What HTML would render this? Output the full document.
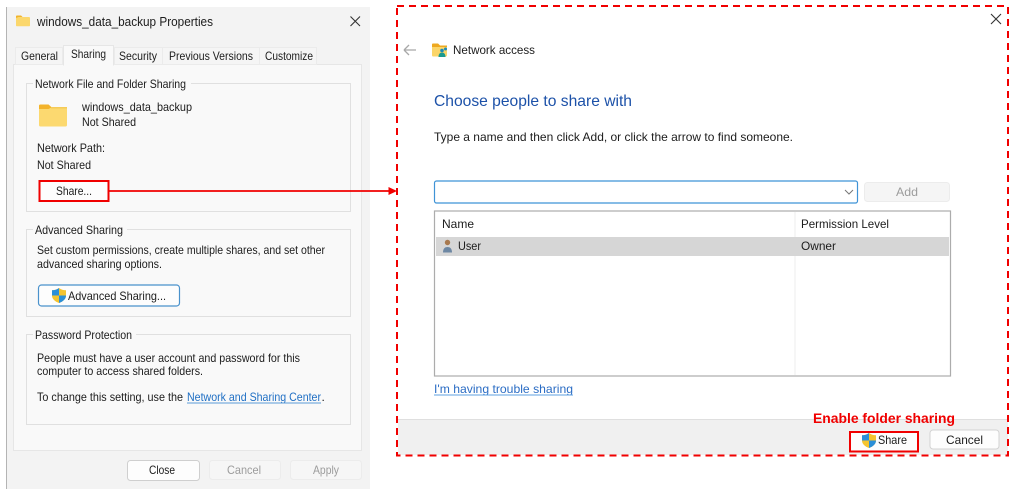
<!DOCTYPE html>
<html><head><meta charset="utf-8"><style>
html,body{margin:0;padding:0;background:#fff;width:1015px;height:494px;overflow:hidden}
svg{display:block;filter:blur(0.25px)}
text{font-family:"Liberation Sans",sans-serif;font-size:12px;fill:#1c1c1c}
</style></head><body>
<svg width="1015" height="494" viewBox="0 0 1015 494" xmlns="http://www.w3.org/2000/svg">
<defs>
<g id="shield"><path d="M7 0C5 1.600 2.600 2.200 0 2.200V7.500C0 11 3 13.500 7 15C11 13.500 14 11 14 7.500V2.200C11.400 2.200 9 1.600 7 0Z" fill="#f4c430"/><path d="M7 0C5 1.600 2.600 2.200 0 2.200V7.500H7Z" fill="#2a8fd8"/><path d="M7 7.500H14C14 11 11 13.500 7 15Z" fill="#2a8fd8"/></g>
</defs>
<rect width="1015" height="494" fill="#fff"/>

<!-- Left dialog -->
<rect x="6" y="7" width="364" height="482" fill="#f3f3f3"/>
<rect x="6" y="7" width="1" height="482" fill="#b4b4b4"/>
<path d="M16 25.500V16.500q0-1 1-1h4l1.500 1.500h6.500q1 0 1 1V25.500q0 .8-1 .8H17q-1 0-1-.8Z" fill="#fbd76c"/>
<path d="M16 18v-1.500q0-1 1-1h4l1.500 1.500h-4z" fill="#f1b32c"/>
<text x="37" y="26" textLength="176" lengthAdjust="spacingAndGlyphs" style="font-size:13px">windows_data_backup Properties</text>
<path d="M350.500 16.500l9.500 9.500M360 16.500l-9.500 9.500" stroke="#333" stroke-width="1.100" fill="none"/>

<!-- Tabs -->
<rect x="13.500" y="64.500" width="348" height="386" fill="#f9f9f9" stroke="#e6e6e6"/>
<rect x="15.500" y="47.500" width="47" height="17" fill="#f5f5f5" stroke="#ebebeb"/>
<rect x="114.500" y="47.500" width="48" height="17" fill="#f5f5f5" stroke="#ebebeb"/>
<rect x="162.500" y="47.500" width="97" height="17" fill="#f5f5f5" stroke="#ebebeb"/>
<rect x="259.500" y="47.500" width="57" height="17" fill="#f5f5f5" stroke="#ebebeb"/>
<path d="M63.500 65.500V45.500H113.500V65.500" fill="#f9f9f9" stroke="#e6e6e6"/>
<text x="21" y="60" textLength="37" lengthAdjust="spacingAndGlyphs">General</text>
<text x="71" y="58" textLength="35" lengthAdjust="spacingAndGlyphs">Sharing</text>
<text x="119" y="60" textLength="38" lengthAdjust="spacingAndGlyphs">Security</text>
<text x="169" y="60" textLength="84" lengthAdjust="spacingAndGlyphs">Previous Versions</text>
<text x="265" y="60" textLength="48" lengthAdjust="spacingAndGlyphs">Customize</text>

<!-- Groups -->
<rect x="26.500" y="83.500" width="324" height="128" fill="none" stroke="#e0e0e0"/>
<rect x="26.500" y="229.500" width="324" height="87" fill="none" stroke="#e0e0e0"/>
<rect x="26.500" y="334.500" width="324" height="90" fill="none" stroke="#e0e0e0"/>
<rect x="33" y="78" width="158" height="12" fill="#f9f9f9"/>
<rect x="33" y="224" width="94" height="12" fill="#f9f9f9"/>
<rect x="33" y="329" width="103" height="12" fill="#f9f9f9"/>
<text x="35" y="88" textLength="151" lengthAdjust="spacingAndGlyphs">Network File and Folder Sharing</text>
<text x="35" y="234" textLength="88" lengthAdjust="spacingAndGlyphs">Advanced Sharing</text>
<text x="35" y="339" textLength="97" lengthAdjust="spacingAndGlyphs">Password Protection</text>

<!-- Big folder -->
<path d="M39 106q0-1.500 1.500-1.500h8l3 2.500h14q1.500 0 1.500 1.500v16.500q0 1.500-1.500 1.500h-25q-1.500 0-1.500-1.500Z" fill="#fcd970"/>
<path d="M39 109v-3q0-1.500 1.500-1.500h8l3 3-3 1.500Z" fill="#f3b32b"/>
<rect x="51" y="107" width="16" height="1.500" fill="#f5cb58"/>
<text x="82" y="111" textLength="110" lengthAdjust="spacingAndGlyphs">windows_data_backup</text>
<text x="82" y="126" textLength="54" lengthAdjust="spacingAndGlyphs">Not Shared</text>
<text x="37" y="152" textLength="68" lengthAdjust="spacingAndGlyphs">Network Path:</text>
<text x="37" y="169" textLength="54" lengthAdjust="spacingAndGlyphs">Not Shared</text>
<rect x="40" y="181" width="68" height="20" fill="#fdfdfd"/>
<text x="56" y="195" textLength="36" lengthAdjust="spacingAndGlyphs">Share...</text>

<text x="37" y="254" textLength="288" lengthAdjust="spacingAndGlyphs">Set custom permissions, create multiple shares, and set other</text>
<text x="37" y="268" textLength="125" lengthAdjust="spacingAndGlyphs">advanced sharing options.</text>
<rect x="38.500" y="285" width="141" height="21" rx="3" fill="#fdfdfd" stroke="#4a92cc" stroke-width="1.200"/>
<use href="#shield" x="52" y="288"/>
<text x="68" y="300" textLength="98" lengthAdjust="spacingAndGlyphs">Advanced Sharing...</text>

<text x="37" y="362" textLength="263" lengthAdjust="spacingAndGlyphs">People must have a user account and password for this</text>
<text x="37" y="375" textLength="166" lengthAdjust="spacingAndGlyphs">computer to access shared folders.</text>
<text x="37" y="401" textLength="146" lengthAdjust="spacingAndGlyphs">To change this setting, use the</text>
<text x="187" y="401" textLength="134" lengthAdjust="spacingAndGlyphs" style="fill:#1f6fc4">Network and Sharing Center</text>
<rect x="187" y="402.500" width="134" height="1" fill="#5a9ad8"/>
<text x="321.500" y="401">.</text>

<rect x="127.500" y="460.500" width="72" height="20" rx="3" fill="#fdfdfd" stroke="#cfcfcf"/>
<rect x="209.500" y="460.500" width="71" height="19" rx="3" fill="#f6f6f6" stroke="#ececec"/>
<rect x="290.500" y="460.500" width="71" height="19" rx="3" fill="#f6f6f6" stroke="#ececec"/>
<text x="149" y="474" textLength="26" lengthAdjust="spacingAndGlyphs">Close</text>
<text x="227" y="474" textLength="34" lengthAdjust="spacingAndGlyphs" style="fill:#9c9c9c">Cancel</text>
<text x="313" y="474" textLength="26" lengthAdjust="spacingAndGlyphs" style="fill:#9c9c9c">Apply</text>

<!-- Right dialog -->
<rect x="398" y="419" width="610" height="36" fill="#f0f0f0"/>
<rect x="398" y="419" width="610" height="1" fill="#dfdfdf"/>
<path d="M991 14l10 10M1001 14l-10 10" stroke="#333" stroke-width="1.100" fill="none"/>
<path d="M404 50h12M404 50l5-5M404 50l5 5" stroke="#a8a8a8" stroke-width="1.300" fill="none"/>

<path d="M432 45q0-1.500 1-1.500h5l2 2h6q1 0 1 1V55q0 1.500-1 1.500h-13q-1 0-1-1.500Z" fill="#fbd568"/>
<path d="M432 47v-2q0-1.500 1-1.500h5l2 2h7v1.500Z" fill="#eea81f"/>
<circle cx="442" cy="50.500" r="1.800" fill="#1d8bb8"/>
<circle cx="445.500" cy="49" r="1.500" fill="#1d8bb8"/>
<path d="M438.500 57c0-3 1.500-4.500 3.500-4.500s3.500 1.500 3.500 4.500Z" fill="#1c9a8e"/>
<text x="453" y="54" textLength="82" lengthAdjust="spacingAndGlyphs">Network access</text>
<text x="434" y="106" textLength="198" lengthAdjust="spacingAndGlyphs" style="font-size:16px;fill:#1c51a8">Choose people to share with</text>
<text x="434" y="141" textLength="359" lengthAdjust="spacingAndGlyphs">Type a name and then click Add, or click the arrow to find someone.</text>

<rect x="434.500" y="181" width="423" height="22" rx="2" fill="#fff" stroke="#3f93d6" stroke-width="1.200"/>
<path d="M845 190l4 4 4-4" stroke="#777" stroke-width="1" fill="none"/>
<rect x="864.500" y="182.500" width="85" height="19" rx="3" fill="#f5f5f5" stroke="#ececec"/>
<text x="896" y="196" textLength="22" lengthAdjust="spacingAndGlyphs" style="fill:#9c9c9c">Add</text>

<rect x="434.500" y="211" width="516" height="165" fill="#fff" stroke="#acacac" stroke-width="1.200"/>
<rect x="794.500" y="212" width="1" height="163" fill="#eeeeee"/>
<rect x="436" y="237" width="513" height="19" fill="#d6d6d6"/>
<text x="442" y="228" textLength="32" lengthAdjust="spacingAndGlyphs">Name</text>
<text x="801" y="228" textLength="88" lengthAdjust="spacingAndGlyphs">Permission Level</text>
<circle cx="447.500" cy="242.500" r="2.700" fill="#a8794f"/>
<path d="M443 252.500c0-4 2-5.500 4.500-5.500s4.500 1.500 4.500 5.500Z" fill="#6d87a3"/>
<text x="458" y="250" textLength="23" lengthAdjust="spacingAndGlyphs">User</text>
<text x="801" y="250" textLength="35" lengthAdjust="spacingAndGlyphs">Owner</text>

<text x="434" y="393" textLength="139" lengthAdjust="spacingAndGlyphs" style="fill:#2a6cc4">I'm having trouble sharing</text>
<rect x="434" y="394.500" width="139" height="1" fill="#5fa0e0"/>

<text x="813" y="423" textLength="142" lengthAdjust="spacingAndGlyphs" style="font-size:14px;font-weight:bold;fill:#f00000">Enable folder sharing</text>
<rect x="850" y="432" width="68" height="19" fill="#fdfdfd"/>
<use href="#shield" x="862" y="433"/>
<text x="878" y="444" textLength="29" lengthAdjust="spacingAndGlyphs">Share</text>
<rect x="930" y="430" width="69" height="19" rx="3" fill="#fdfdfd" stroke="#d2d2d2"/>
<text x="946" y="444" textLength="37" lengthAdjust="spacingAndGlyphs">Cancel</text>

<!-- Annotations -->
<rect x="39.500" y="181" width="69" height="20" fill="none" stroke="#f00000" stroke-width="2"/>
<path d="M109 191H390" stroke="#f00000" stroke-width="1.800"/>
<path d="M388.500 187L397 191L388.500 195Z" fill="#f00000"/>
<rect x="397" y="6" width="611" height="449.500" fill="none" stroke="#f00000" stroke-width="2" stroke-dasharray="7 5"/>
<rect x="850" y="432" width="68" height="19.500" fill="none" stroke="#f00000" stroke-width="2"/>
</svg>
</body></html>
